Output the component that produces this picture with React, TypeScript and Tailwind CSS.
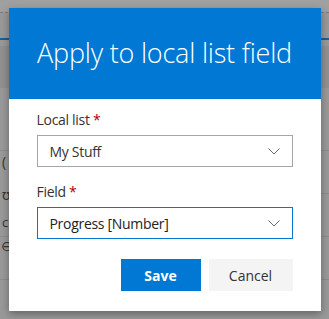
import React from "react";

function Chevron() {
  return (
    <svg width="12" height="12" viewBox="0 0 12 12" fill="none" className="shrink-0">
      <path d="M0.5 3.5 L6 9 L11.5 3.5" stroke="#666" strokeWidth="1" />
    </svg>
  );
}

export default function App() {
  return (
    <div className="relative w-[329px] h-[319px] overflow-hidden bg-[#999999]" style={{ fontFamily: '"Open Sans", "Noto Sans", sans-serif' }}>
      {/* underlying page, dimmed */}
      <div className="absolute inset-0">
        <div className="h-[12px] bg-[#a0a0a0]" />
        <div className="h-px border-t border-dashed border-[#7a7a7a]" />
        <div className="h-[25px]" />
        <div className="h-[2px] bg-[#1f5d93]" />
        <div className="h-[6px]" />
        <div className="h-[42px] bg-[#919191]" />
        <div className="h-[62px]" />
        <div className="h-px bg-[#8c8c8c]" />
        <div className="h-[42px]" />
        <div className="h-px bg-[#8c8c8c]" />
        <div className="h-[42px]" />
        <div className="h-px bg-[#8c8c8c]" />
        <div className="h-[42px]" />
        <div className="h-px bg-[#8c8c8c]" />
      </div>
      <div className="absolute left-[2px] top-[155px] text-[#333] text-[14px] leading-none">(</div>
      <div className="absolute left-[2px] top-[188px] text-[#333] text-[14px] leading-none">ʊ</div>
      <div className="absolute left-[2px] top-[216px] text-[#333] text-[13px] leading-none">c</div>
      <div className="absolute left-[1px] top-[239px] text-[#333] text-[14px] leading-none">⊖</div>

      <div className="absolute inset-0 flex items-center justify-center">
        <div className="w-[312px] bg-white flex flex-col shadow-[0_3px_8px_rgba(0,0,0,0.35)]">
          <div className="h-[91px] bg-[#0078d4] flex items-center justify-center">
            <span className="text-white text-[27px] font-light tracking-[-0.2px] leading-none pb-[2px]">Apply to local list field</span>
          </div>
          <div className="flex flex-col px-[28px] pt-[11px] pb-[20px]">
            <label className="text-[14px] text-[#333] leading-[20px] tracking-[-0.3px]">
              Local list <span className="text-[#a80000]">*</span>
            </label>
            <div className="mt-[5px] h-[32px] border border-[#a6a6a6] flex items-center justify-between pl-[12px] pr-[12px]">
              <span className="text-[14px] text-[#333] tracking-[-0.3px]">My Stuff</span>
              <Chevron />
            </div>
            <label className="mt-[15px] text-[14px] text-[#333] leading-[20px] tracking-[-0.3px]">
              Field <span className="text-[#a80000]">*</span>
            </label>
            <div className="mt-[5px] h-[32px] border border-[#0078d4] flex items-center justify-between pl-[12px] pr-[12px]">
              <span className="text-[14px] text-[#222] tracking-[-0.3px]">Progress [Number]</span>
              <Chevron />
            </div>
            <div className="mt-[20px] flex justify-end gap-[8px]">
              <button className="w-[80px] h-[32px] bg-[#0078d4] text-white text-[14px] font-bold">Save</button>
              <button className="w-[84px] h-[32px] bg-[#f4f4f4] text-[#333] text-[14px]">Cancel</button>
            </div>
          </div>
        </div>
      </div>
    </div>
  );
}
